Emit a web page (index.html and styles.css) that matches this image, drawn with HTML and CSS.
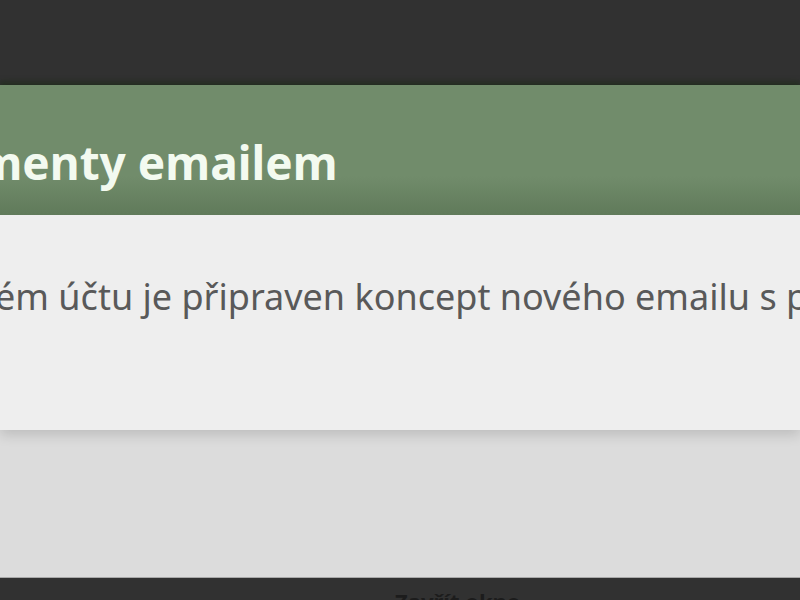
FILE: index.html
```html
<!DOCTYPE html>
<html lang="cs">
<head>
<meta charset="utf-8">
<title>Odeslat dokumenty emailem</title>
<link rel="stylesheet" href="styles.css">
</head>
<body>
<div class="topbar"></div>
<div class="dialog">
  <div class="dialog-header">
    <h1 class="dialog-title">Odeslat dokumenty emailem</h1>
  </div>
  <div class="dialog-body">
    <p class="dialog-text">V emailovém účtu je připraven koncept nového emailu s přílohou.</p>
  </div>
</div>
<div class="backdrop"></div>
<div class="footer">
  <span class="footer-text">Zavřít okno</span>
</div>
</body>
</html>
```
FILE: styles.css
```css
html, body {
  margin: 0;
  padding: 0;
  height: 100%;
  overflow: hidden;
}
body {
  background: #dcdcdc;
  font-family: "Noto Sans", "DejaVu Sans", sans-serif;
  display: flex;
  flex-direction: column;
}
.topbar {
  height: 85px;
  flex: none;
  background: #313131;
}
.dialog {
  flex: none;
  position: relative;
  z-index: 1;
  box-shadow: 0 5px 12px rgba(0, 0, 0, 0.14);
}
.dialog-header {
  height: 130px;
  box-sizing: border-box;
  padding-top: 54px;
  background: linear-gradient(to bottom, #718c6b 0, #718c6b 70%, #607a5a 100%);
  box-shadow: 0 -3px 5px rgba(25, 45, 20, 0.55);
  white-space: nowrap;
}
.dialog-title {
  margin: 0 0 0 -328px;
  font-size: 46px;
  line-height: 1;
  font-weight: 700;
  color: #f3faf0;
}
.dialog-body {
  height: 215px;
  box-sizing: border-box;
  padding-top: 64px;
  background: #eeeeee;
  white-space: nowrap;
}
.dialog-text {
  margin: 0 0 0 -168px;
  font-size: 36px;
  line-height: 1;
  font-weight: 400;
  color: #595959;
}
.backdrop {
  flex: 1;
  background: #dcdcdc;
}
.footer {
  height: 22px;
  flex: none;
  background: #313131;
  border-top: 1px solid #a9a9a9;
  overflow: hidden;
}
.footer-text {
  display: block;
  margin: 12px 0 0 395px;
  font-size: 22px;
  font-weight: 700;
  line-height: 1;
  color: #1c1c1c;
}
```
